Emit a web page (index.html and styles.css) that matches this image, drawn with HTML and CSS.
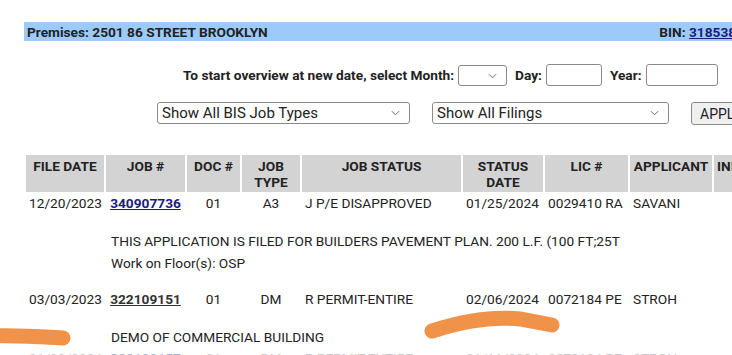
FILE: index.html
```html
<!DOCTYPE html>
<html lang="en">
<head>
    <meta charset="UTF-8">
    <meta name="viewport" content="width=device-width, initial-scale=1.0">
    <title>Property Profile - Job Overview</title>
    <link rel="stylesheet" href="styles.css">
</head>
<body>

<div class="page">
    <div class="premises">
        <span>Premises: 2501 86 STREET BROOKLYN</span>
        <span>BIN: <a href="#">3185388</a></span>
    </div>

    <form class="date-row">
        <label for="month">To start overview at new date, select Month:</label>
        <span class="sel sel-month">
            <select id="month"><option></option></select>
            <svg class="chev" viewBox="0 0 10 6"><path d="M1 1 L5 5 L9 1" /></svg>
        </span>
        <label for="day">Day:</label>
        <input type="text" id="day" class="day">
        <label for="year">Year:</label>
        <input type="text" id="year" class="year">
    </form>

    <div class="filter-row">
        <span class="sel sel-types">
            <select><option>Show All BIS Job Types</option></select>
            <svg class="chev" viewBox="0 0 10 6"><path d="M1 1 L5 5 L9 1" /></svg>
        </span>
        <span class="sel sel-filings">
            <select><option>Show All Filings</option></select>
            <svg class="chev" viewBox="0 0 10 6"><path d="M1 1 L5 5 L9 1" /></svg>
        </span>
        <button type="button">APPLY</button>
    </div>

    <table class="jobs">
        <colgroup>
            <col style="width:78px"><col style="width:79px"><col style="width:53px">
            <col style="width:58px"><col style="width:159px"><col style="width:80px">
            <col style="width:83px"><col style="width:82px"><col style="width:60px">
        </colgroup>
        <thead>
            <tr>
                <th>FILE DATE</th>
                <th>JOB #</th>
                <th>DOC #</th>
                <th>JOB<br>TYPE</th>
                <th>JOB STATUS</th>
                <th>STATUS<br>DATE</th>
                <th>LIC #</th>
                <th>APPLICANT</th>
                <th class="left">INITIAL COST</th>
            </tr>
        </thead>
        <tbody>
            <tr class="job">
                <td>12/20/2023</td>
                <td class="c"><a href="#">340907736</a></td>
                <td class="c">01</td>
                <td class="c">A3</td>
                <td>J P/E DISAPPROVED</td>
                <td>01/25/2024</td>
                <td>0029410 RA</td>
                <td>SAVANI</td>
                <td></td>
            </tr>
            <tr class="desc">
                <td></td>
                <td colspan="8">THIS APPLICATION IS FILED FOR BUILDERS PAVEMENT PLAN. 200 L.F. (100 FT;25T<br>Work on Floor(s): OSP</td>
            </tr>
            <tr class="job">
                <td>03/03/2023</td>
                <td class="c"><a href="#" class="visited">322109151</a></td>
                <td class="c">01</td>
                <td class="c">DM</td>
                <td>R PERMIT-ENTIRE</td>
                <td>02/06/2024</td>
                <td>0072184 PE</td>
                <td>STROH</td>
                <td></td>
            </tr>
            <tr class="desc last">
                <td></td>
                <td colspan="8">DEMO OF COMMERCIAL BUILDING</td>
            </tr>
            <tr class="job faded">
                <td>01/09/2024</td>
                <td class="c"><a href="#">322109157</a></td>
                <td class="c">01</td>
                <td class="c">DM</td>
                <td>R PERMIT-ENTIRE</td>
                <td>01/11/2024</td>
                <td>0072184 PE</td>
                <td>STROH</td>
                <td></td>
            </tr>
        </tbody>
    </table>
</div>

<!-- marker scribbles drawn over the screenshot -->
<svg class="marker" width="732" height="355" viewBox="0 0 732 355">
    <path d="M-10 336 C20 335 45 337 63 338" />
    <path d="M432 331 C460 322 490 316 520 319 L552 325" />
</svg>

</body>
</html>
```

FILE: styles.css
```css
html, body {
    margin: 0;
    overflow: hidden;
    background: #ffffff;
}

body {
    font-family: 'Roboto', 'Liberation Sans', sans-serif;
    font-size: 13.7px;
    color: #222;
    width: 732px;
    height: 355px;
    position: relative;
}

.page {
    width: 760px;
    padding: 22px 0 0 24px;
}

a {
    color: #1c1c7c;
    font-weight: bold;
}

a.visited {
    color: #333;
}

.premises {
    display: flex;
    justify-content: space-between;
    align-items: center;
    width: 717px;
    height: 19px;
    padding: 0 2px 0 3px;
    background: #9ccbfb;
    font-weight: bold;
}

.date-row {
    display: flex;
    align-items: center;
    margin: 23px 0 0 159px;
    height: 22px;
    font-weight: bold;
}

.date-row label {
    margin-right: 4px;
}

.date-row input {
    height: 22px;
    box-sizing: border-box;
    border: 1px solid #8a8a8a;
    border-radius: 3px;
    margin: 0 8px 0 0;
    padding: 0;
}

.date-row .day {
    width: 56px;
}

.date-row .year {
    width: 72px;
}

.sel {
    position: relative;
    display: inline-block;
}

.sel select {
    appearance: none;
    -webkit-appearance: none;
    box-sizing: border-box;
    height: 22px;
    border: 1px solid #8a8a8a;
    border-radius: 3px;
    background: #fff;
    font-family: 'Roboto', 'Liberation Sans', sans-serif;
    font-size: 15px;
    color: #222;
    padding: 0 0 0 4px;
    margin: 0;
    display: block;
}

.chev {
    position: absolute;
    top: 8px;
    right: 10px;
    width: 9px;
    height: 6px;
    fill: none;
    stroke: #555;
    stroke-width: 1;
}

.sel-month {
    margin-right: 8px;
}

.sel-month select {
    width: 49px;
    height: 21px;
}

.filter-row {
    display: flex;
    align-items: center;
    gap: 22px;
    margin: 16px 0 0 133px;
    height: 22px;
}

.sel-types select {
    width: 253px;
}

.sel-filings select {
    width: 237px;
}

button {
    height: 23px;
    margin-top: 1px;
    padding: 0 8px;
    border: 1px solid #8a8a8a;
    border-radius: 3px;
    background: #efefef;
    font-family: 'Roboto', 'Liberation Sans', sans-serif;
    font-size: 14px;
    color: #222;
}

.jobs {
    margin-top: 31px;
    border-collapse: separate;
    border-spacing: 2px 0;
    table-layout: fixed;
    width: 752px;
}

.jobs th {
    background: #d3d3d3;
    font-weight: bold;
    vertical-align: top;
    line-height: 16px;
    padding: 3px 0 2px;
    height: 32px;
    box-sizing: content-box;
    white-space: nowrap;
    overflow: hidden;
}

.jobs th.left {
    text-align: left;
    padding-left: 3px;
}

.jobs td {
    line-height: 22px;
    padding: 0 0 0 3px;
    white-space: nowrap;
    overflow: hidden;
}

.jobs td.c {
    text-align: center;
    padding: 0;
}

.jobs .desc td {
    padding: 16px 0 14px 5px;
}

.jobs .desc.last td {
    padding: 17px 0 0 5px;
    line-height: 20px;
}

.jobs .faded td {
    color: #c9c9c9;
}

.jobs .faded a {
    color: #a7aaf0;
}

.marker {
    position: absolute;
    left: 0;
    top: 0;
    pointer-events: none;
}

.marker path {
    fill: none;
    stroke: #f0924a;
    stroke-width: 15;
    stroke-linecap: round;
}
```
